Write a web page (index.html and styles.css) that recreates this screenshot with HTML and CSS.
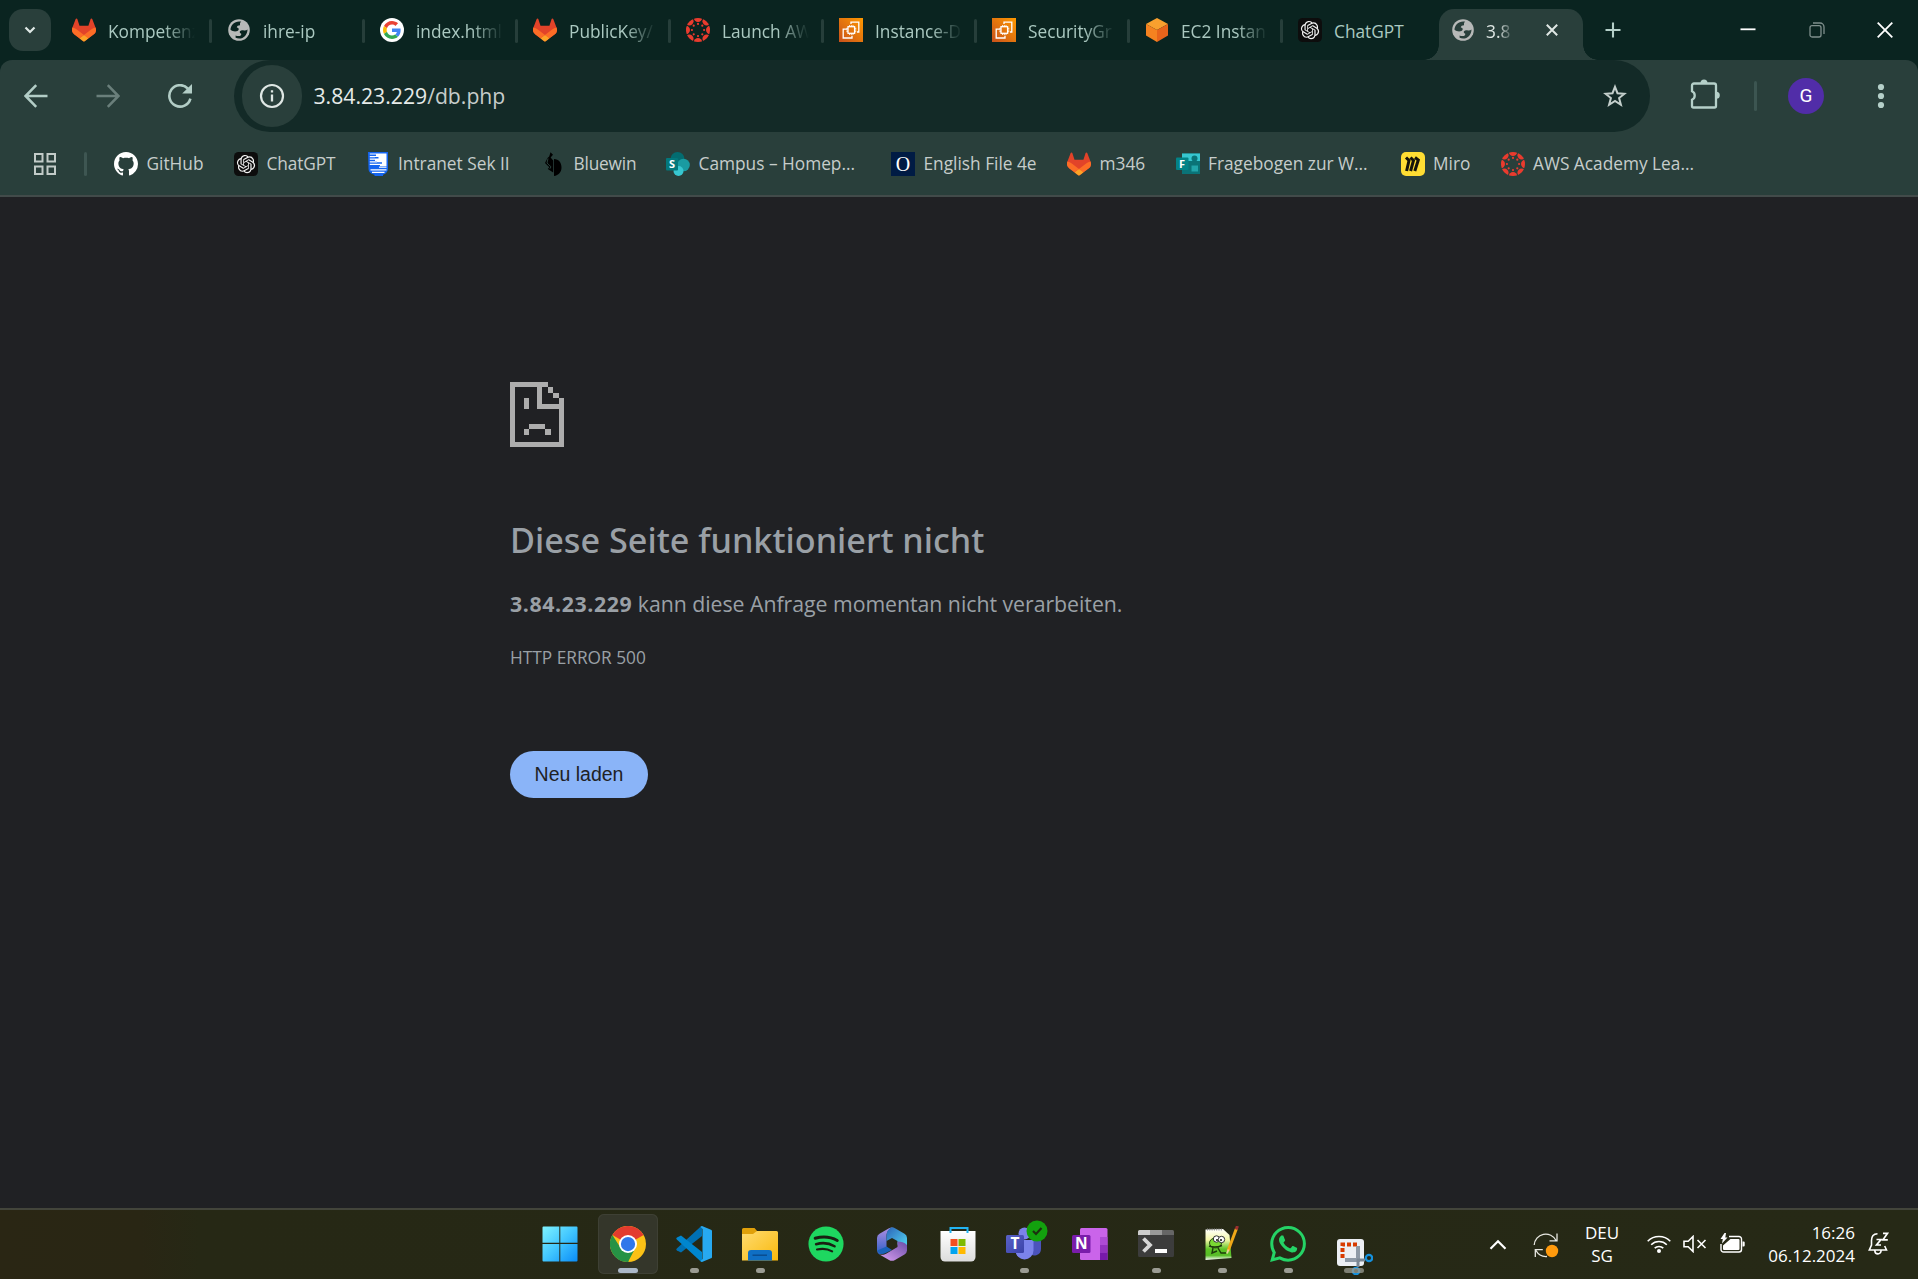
FILE: index.html
```html
<!DOCTYPE html>
<html lang="de">
<head>
<meta charset="utf-8">
<title>3.84.23.229</title>
<link rel="stylesheet" href="styles.css">
</head>
<body>
<svg class="defs" aria-hidden="true">
  <defs>
    <linearGradient id="g-ec2" x1="0" y1="1" x2="1" y2="0"><stop offset="0" stop-color="#c8511b"/><stop offset="1" stop-color="#ff9900"/></linearGradient>
    <linearGradient id="g-win" x1="0" y1="0" x2="1" y2="1"><stop offset="0" stop-color="#7ff3fe"/><stop offset=".5" stop-color="#41c6ff"/><stop offset="1" stop-color="#0a8cf7"/></linearGradient>
    <linearGradient id="g-folder" x1="0" y1="0" x2="1" y2="1"><stop offset="0" stop-color="#ffdb70"/><stop offset="1" stop-color="#f9b90c"/></linearGradient>
    <linearGradient id="g-m1" x1="0" y1="0" x2="0" y2="1"><stop offset="0" stop-color="#b08ee2"/><stop offset="1" stop-color="#2c5fc6"/></linearGradient>
    <linearGradient id="g-m2" x1="0" y1="0" x2="1" y2="1"><stop offset="0" stop-color="#2b63b8"/><stop offset="1" stop-color="#55dcf5"/></linearGradient>
    <linearGradient id="g-m3" x1="0" y1="1" x2="1" y2="0"><stop offset="0" stop-color="#dca2f3"/><stop offset="1" stop-color="#6a4da8"/></linearGradient>
    <linearGradient id="g-store" x1="0" y1="0" x2="0" y2="1"><stop offset="0" stop-color="#fff"/><stop offset="1" stop-color="#dcdcdc"/></linearGradient>
    <linearGradient id="g-note" x1="0" y1="0" x2="0" y2="1"><stop offset="0" stop-color="#fff"/><stop offset=".35" stop-color="#f4f7a8"/><stop offset=".65" stop-color="#5ec427"/><stop offset=".85" stop-color="#57bb26"/><stop offset="1" stop-color="#fff"/></linearGradient>
    <linearGradient id="g-teams" x1="0" y1="0" x2="1" y2="1"><stop offset="0" stop-color="#5a62c8"/><stop offset="1" stop-color="#3a41a8"/></linearGradient>
    <clipPath id="c-ring"><circle cx="12" cy="12" r="12"/></clipPath>

    <symbol id="i-gitlab" viewBox="0 0 25 24">
      <path fill="#e24329" d="m24.507 9.5-.034-.09L21.082.562a.896.896 0 0 0-1.694.091l-2.29 7.01H7.825L5.535.653a.898.898 0 0 0-1.694-.09L.451 9.411.416 9.5a6.297 6.297 0 0 0 2.09 7.278l.012.01.03.022 5.16 3.867 2.56 1.935 1.554 1.176a1.051 1.051 0 0 0 1.268 0l1.555-1.176 2.56-1.935 5.197-3.89.014-.01A6.297 6.297 0 0 0 24.507 9.5Z"/>
      <path fill="#fc6d26" d="m24.507 9.5-.034-.09a11.44 11.44 0 0 0-4.56 2.051l-7.447 5.632 4.742 3.584 5.197-3.89.014-.01A6.297 6.297 0 0 0 24.507 9.5Z"/>
      <path fill="#fca326" d="m7.707 20.677 2.56 1.935 1.555 1.176a1.051 1.051 0 0 0 1.268 0l1.555-1.176 2.56-1.935-4.743-3.584-4.755 3.584Z"/>
      <path fill="#fc6d26" d="M5.01 11.461a11.43 11.43 0 0 0-4.56-2.05L.416 9.5a6.297 6.297 0 0 0 2.09 7.278l.012.01.03.022 5.16 3.867 4.745-3.584-7.444-5.632Z"/>
    </symbol>
    <symbol id="i-globe" viewBox="0 0 24 24">
      <circle cx="12" cy="12" r="10.8" fill="#b7b9b8"/>
      <path fill="var(--hole)" d="M12.2 3.4c-5 0-8.700 4-8.700 8.400 1.600 1.300 3.800 1.800 6 1.500 1.300-.2 2.200-.9 2.200-2 0-1-.7-1.500-1.900-1.700.2-1.600 1.300-2.300 3.200-2.300V5.600c0-.9.4-1.500 1.200-1.900-.7-.2-1.300-.3-2-.3zM20.500 11.500c-1 .9-2.600 1.200-4.200.8-1.500-.3-2.500 0-3.300.9-.7.9-.1 2 1.100 2.200.6 1.500-.4 2.600-2.400 2.600-1.200 0-2.300 0-3.100-.5v2.300c1 .5 2.200.8 3.500.8 4.800 0 8.400-4 8.400-9.100z"/>
    </symbol>
    <symbol id="i-google" viewBox="0 0 24 24">
      <circle cx="12" cy="12" r="12" fill="#fff"/>
      <g transform="translate(3 3) scale(.375)">
        <path fill="#ea4335" d="M24 9.500c3.540 0 6.710 1.220 9.210 3.600l6.850-6.850C35.900 2.380 30.470 0 24 0 14.620 0 6.510 5.380 2.560 13.220l7.980 6.190C12.430 13.720 17.740 9.500 24 9.500z"/>
        <path fill="#4285f4" d="M46.980 24.550c0-1.570-.15-3.090-.38-4.550H24v9.020h12.940c-.58 2.960-2.260 5.480-4.780 7.180l7.730 6c4.510-4.180 7.090-10.360 7.090-17.650z"/>
        <path fill="#fbbc05" d="M10.530 28.590c-.48-1.450-.76-2.990-.76-4.590s.27-3.140.76-4.590l-7.980-6.190C.92 16.460 0 20.120 0 24c0 3.880.92 7.540 2.560 10.780l7.970-6.190z"/>
        <path fill="#34a853" d="M24 48c6.480 0 11.930-2.130 15.890-5.810l-7.730-6c-2.150 1.450-4.920 2.300-8.160 2.300-6.260 0-11.570-4.220-13.470-9.910l-7.980 6.190C6.510 42.620 14.620 48 24 48z"/>
      </g>
    </symbol>
    <symbol id="i-canvas" viewBox="0 0 24 24">
      <g fill="#ea3b2e" clip-path="url(#c-ring)">
        <circle cx="12" cy="-.2" r="4.200"/><circle cx="12" cy="24.200" r="4.200"/><circle cx="-.2" cy="12" r="4.200"/><circle cx="24.200" cy="12" r="4.200"/>
        <circle cx="3.370" cy="3.370" r="4.200"/><circle cx="20.630" cy="3.370" r="4.200"/><circle cx="3.370" cy="20.630" r="4.200"/><circle cx="20.630" cy="20.630" r="4.200"/>
        <circle cx="12" cy="5.900" r="1.100"/><circle cx="12" cy="18.100" r="1.100"/><circle cx="5.900" cy="12" r="1.100"/><circle cx="18.100" cy="12" r="1.100"/>
        <circle cx="7.700" cy="7.700" r="1.100"/><circle cx="16.300" cy="7.700" r="1.100"/><circle cx="7.700" cy="16.300" r="1.100"/><circle cx="16.300" cy="16.300" r="1.100"/>
      </g>
    </symbol>
    <symbol id="i-ec2" viewBox="0 0 24 24">
      <path fill="url(#g-ec2)" d="M0 0h24v24H0z"/>
      <g fill="none" stroke="#fff" stroke-width="1.300">
        <path d="M12 6V4.200h7.800V14H18M8 11.200H4.200V20H13v-2.200"/>
        <rect x="9" y="8.700" width="6.600" height="6.600"/>
        <path stroke-width=".9" d="M10.600 7v1.700M12.300 7v1.700M14 7v1.700M10.600 15.300V17M12.300 15.300V17M14 15.300V17M7.300 10.300H9M7.300 12H9M7.300 13.700H9M15.600 10.300h1.700M15.600 12h1.700M15.600 13.700h1.700"/>
      </g>
    </symbol>
    <symbol id="i-cube" viewBox="0 0 24 24">
      <path fill="#f9a02e" d="M12 0 23 6 12 12 1 6z"/><path fill="#f58220" d="M1 6l11 6v12L1 17.500z"/><path fill="#e8641b" d="M23 6l-11 6v12l11-6.500z"/>
    </symbol>
    <symbol id="i-gpt" viewBox="0 0 24 24">
      <rect width="24" height="24" rx="4.500" fill="#0d0d0d"/>
      <path transform="translate(2.900 2.900) scale(.76)" fill="#f2f2f2" d="M22.2819 9.8211a5.9847 5.9847 0 0 0-.5157-4.9108 6.0462 6.0462 0 0 0-6.5098-2.9A6.0651 6.0651 0 0 0 4.9807 4.1818a5.9847 5.9847 0 0 0-3.9977 2.9 6.0462 6.0462 0 0 0 .7427 7.0966 5.98 5.98 0 0 0 .511 4.9107 6.051 6.051 0 0 0 6.5146 2.9001A5.9847 5.9847 0 0 0 13.2599 24a6.0557 6.0557 0 0 0 5.7718-4.2058 5.9894 5.9894 0 0 0 3.9977-2.9001 6.0557 6.0557 0 0 0-.7475-7.0729zm-9.022 12.6081a4.4755 4.4755 0 0 1-2.8764-1.0408l.1419-.0804 4.7783-2.7582a.7948.7948 0 0 0 .3927-.6813v-6.7369l2.02 1.1686a.071.071 0 0 1 .038.052v5.5826a4.504 4.504 0 0 1-4.4945 4.4944zm-9.6607-4.1254a4.4708 4.4708 0 0 1-.5346-3.0137l.142.0852 4.783 2.7582a.7712.7712 0 0 0 .7806 0l5.8428-3.3685v2.3324a.0804.0804 0 0 1-.0332.0615L9.74 19.9502a4.4992 4.4992 0 0 1-6.1408-1.6464zM2.3408 7.8956a4.485 4.485 0 0 1 2.3655-1.9728V11.6a.7664.7664 0 0 0 .3879.6765l5.8144 3.3543-2.0201 1.1685a.0757.0757 0 0 1-.071 0l-4.8303-2.7865A4.504 4.504 0 0 1 2.3408 7.872zm16.5963 3.8558L13.1038 8.364 15.1192 7.2a.0757.0757 0 0 1 .071 0l4.8303 2.7913a4.4944 4.4944 0 0 1-.6765 8.1042v-5.6772a.79.79 0 0 0-.407-.667zm2.0107-3.0231l-.142-.0852-4.7735-2.7818a.7759.7759 0 0 0-.7854 0L9.409 9.2297V6.8974a.0662.0662 0 0 1 .0284-.0615l4.8303-2.7866a4.4992 4.4992 0 0 1 6.6802 4.66zM8.3065 12.863l-2.02-1.1638a.0804.0804 0 0 1-.038-.0567V6.0742a4.4992 4.4992 0 0 1 7.3757-3.4537l-.142.0805L8.704 5.459a.7948.7948 0 0 0-.3927.6813zm1.0976-2.3654l2.602-1.4998 2.6069 1.4998v2.9994l-2.5974 1.4997-2.6067-1.4997Z"/>
    </symbol>
  </defs>
</svg>

<header class="tabstrip">
  <button class="tab-search"><svg width="18" height="18" viewBox="0 0 18 18"><path d="M4.500 6.500 9 11l4.500-4.500" fill="none" stroke="#dfe9e6" stroke-width="2.200"/></svg></button>
  <div class="tab first"><svg class="fav"><use href="#i-gitlab"/></svg><span class="title">Kompetenz</span></div>
  <div class="tab"><svg class="fav"><use href="#i-globe"/></svg><span class="title">ihre-ip</span></div>
  <div class="tab"><svg class="fav"><use href="#i-google"/></svg><span class="title">index.html</span></div>
  <div class="tab"><svg class="fav"><use href="#i-gitlab"/></svg><span class="title">PublicKey/</span></div>
  <div class="tab"><svg class="fav"><use href="#i-canvas"/></svg><span class="title">Launch AW</span></div>
  <div class="tab"><svg class="fav"><use href="#i-ec2"/></svg><span class="title">Instance-D</span></div>
  <div class="tab"><svg class="fav"><use href="#i-ec2"/></svg><span class="title">SecurityGr</span></div>
  <div class="tab"><svg class="fav"><use href="#i-cube"/></svg><span class="title">EC2 Instan</span></div>
  <div class="tab last"><svg class="fav"><use href="#i-gpt"/></svg><span class="title">ChatGPT</span></div>
  <div class="tab active"><svg class="fav"><use href="#i-globe"/></svg><span class="title">3.8</span><svg class="close" width="12" height="12" viewBox="0 0 12 12"><path d="M.8.8l10.400 10.400M11.200.8.8 11.200" stroke="#dfe7e4" stroke-width="2"/></svg></div>
  <button class="newtab"><svg width="16" height="16" viewBox="0 0 16 16"><path d="M8 .5v15M.5 8h15" stroke="#b5d0c9" stroke-width="2.100"/></svg></button>
  <div class="window-controls">
    <svg width="16" height="16" viewBox="0 0 16 16"><path d="M.5 7.300h15" stroke="#fff" stroke-width="1.800"/></svg>
    <svg width="16" height="16" viewBox="0 0 16 16"><g fill="none" stroke="#7f8f8c" stroke-width="1.300"><rect x="1" y="3.700" width="11" height="11.300" rx="2"/><path d="M4 1h7a4 4 0 0 1 4 4v7"/></g></svg>
    <svg width="16" height="16" viewBox="0 0 16 16"><path d="M.7.7l14.600 14.600M15.300.7.7 15.300" stroke="#fff" stroke-width="1.800"/></svg>
  </div>
</header>

<div class="toolbar-wrap">
<nav class="toolbar">
  <svg class="nav-ico" viewBox="0 0 24 24"><path d="M23.500 12H2M12.200 1.200 1.600 12l10.600 10.800" fill="none" stroke="#b2cdc6" stroke-width="2.500"/></svg>
  <svg class="nav-ico" viewBox="0 0 24 24"><path d="M.5 12H22M11.800 1.200 22.400 12 11.800 22.800" fill="none" stroke="#6a7f7b" stroke-width="2.500"/></svg>
  <svg class="nav-ico" viewBox="0 0 24 24"><path d="M22.400 14.600A10.700 10.700 0 1 1 19.900 4.600" fill="none" stroke="#b2cdc6" stroke-width="2.600"/><path d="M24 0v9.500h-9.800z" fill="#b2cdc6"/></svg>
  <div class="omnibox">
    <span class="site-info"><svg width="26" height="26" viewBox="0 0 26 26"><circle cx="13" cy="13" r="11" fill="none" stroke="#dfe7e4" stroke-width="2.200"/><path d="M13 11.500v7M13 7.200v2.400" stroke="#dfe7e4" stroke-width="2.300"/></svg></span>
    <span class="url"><b>3.84.23.229</b>/db.php</span>
    <svg class="star" width="24" height="24" viewBox="0 0 24 24"><path d="M12 2.800l2.500 6.400 6.900.5-5.300 4.400 1.800 6.700-5.900-3.800-5.900 3.800 1.800-6.700L2.600 9.700l6.900-.5z" fill="none" stroke="#c4cfcc" stroke-width="2"/></svg>
  </div>
  <svg class="puzzle" width="30" height="30" viewBox="0 0 30 30"><path d="M2 6.500a2 2 0 0 1 2-2h20a2 2 0 0 1 2 2v20.500a1.500 1.500 0 0 1-1.500 1.500h-21A1.500 1.500 0 0 1 2 27v-6.300a4.600 4.600 0 0 0 0-8.400z" fill="none" stroke="#b5d0c9" stroke-width="2.300"/><path d="M10.500 4a3.500 3.500 0 0 1 7 0zM26.300 12.800a3.500 3.500 0 0 1 0 7z" fill="#b5d0c9"/></svg>
  <i class="bar-divider"></i>
  <span class="avatar">G</span>
  <svg class="menu" width="8" height="26" viewBox="0 0 8 26"><g fill="#b5d0c9"><circle cx="4" cy="4" r="3.100"/><circle cx="4" cy="13" r="3.100"/><circle cx="4" cy="22" r="3.100"/></g></svg>
</nav>
</div>

<nav class="bookmarks">
  <svg class="apps" width="22" height="22" viewBox="0 0 22 22"><g fill="none" stroke="#c2cbc8" stroke-width="2"><rect x="1" y="1" width="7.500" height="7.500"/><rect x="13.500" y="1" width="7.500" height="7.500"/><rect x="1" y="13.500" width="7.500" height="7.500"/><rect x="13.500" y="13.500" width="7.500" height="7.500"/></g></svg>
  <i class="bm-divider"></i>
  <a><svg class="fav" viewBox="0 0 16 16"><path fill="#fff" d="M8 0C3.580 0 0 3.580 0 8c0 3.540 2.290 6.530 5.470 7.590.4.070.55-.17.55-.38 0-.19-.01-.82-.01-1.490-2.010.37-2.530-.49-2.690-.94-.09-.23-.48-.94-.82-1.130-.28-.15-.68-.52-.01-.53.63-.01 1.080.58 1.230.82.72 1.210 1.870.87 2.330.66.070-.52.28-.87.51-1.070-1.780-.2-3.640-.89-3.640-3.950 0-.87.31-1.590.82-2.150-.08-.2-.36-1.020.08-2.120 0 0 .67-.21 2.200.82.64-.18 1.320-.27 2-.27s1.360.09 2 .27c1.530-1.040 2.200-.82 2.200-.82.44 1.100.16 1.920.08 2.120.51.56.82 1.270.82 2.150 0 3.070-1.870 3.750-3.650 3.950.29.25.54.73.54 1.480 0 1.070-.01 1.930-.01 2.200 0 .21.15.46.55.38A8.010 8.010 0 0 0 16 8c0-4.420-3.580-8-8-8z"/></svg><span class="b-git">GitHub</span></a>
  <a><svg class="fav"><use href="#i-gpt"/></svg><span class="b-gpt">ChatGPT</span></a>
  <a><svg class="fav" viewBox="0 0 24 24"><path fill="#1565f0" d="M2 0h20v16.500c0 3-1.500 5-5 6.200V24H8.500v-1.200C4 21.700 2.500 19.500 2.500 16.500z"/><path fill="#fff" d="M9 1.500h11.500V9H9zM11 9h9.500v5h-9.500z"/><g stroke="#fff" stroke-width="1.300"><path d="M13 15.200h7.500M4.500 17.800h16M6 20.400h12.500"/></g><g stroke="#1565f0" stroke-width="1.400"><path d="M3 3.200h7M3 5.800h9.500M3 8.400h5M3 11h13M3 13.600h11"/></g><path stroke="#fff" stroke-width="1.200" d="M3.800 2H9M3.800 4.600H9M3.800 7.200H9M3.800 9.800H11M3.800 12.300H11"/></svg><span class="b-intra">Intranet Sek II</span></a>
  <a><svg class="fav" viewBox="0 0 24 24"><path fill="#000" d="M9.500.3 12 2.800 9.600 5.500 12.200 8.500v12L6.800 17l1.500-1.800L4 11l2.500-5 1.700-1.500zM13 7c5 .3 7.500 3.800 7.500 8.500 0 4.500-3 8-7.500 8.500z"/><path d="M7 6.500 6 11l4 3.800-1.200 2" fill="none" stroke="#293f3b" stroke-width="1"/></svg><span class="b-blue">Bluewin</span></a>
  <a><svg class="fav" viewBox="0 0 24 24"><circle cx="11.500" cy="7" r="7" fill="#036c70"/><circle cx="17.500" cy="13" r="6.300" fill="#1a9ba1"/><circle cx="12.500" cy="19" r="5" fill="#37c6d0"/><rect y="6" width="12" height="12.500" rx="1" fill="#03787c"/><text x="6" y="16" text-anchor="middle" class="glyph">S</text></svg><span class="long">Campus – Homep...</span></a>
  <a><svg class="fav" viewBox="0 0 24 24"><path fill="#001b44" d="M0 0h24v24H0z"/><text x="12" y="19" text-anchor="middle" class="glyph-o">O</text></svg><span class="b-eng">English File 4e</span></a>
  <a><svg class="fav"><use href="#i-gitlab"/></svg><span class="b-m">m346</span></a>
  <a><svg class="fav" viewBox="0 0 24 24"><path fill="#0a7377" d="M6 1.500h18v20.500H6z"/><path fill="#37c6d0" d="M6 1.500h18V9H6z"/><circle cx="18.500" cy="6.500" r="3" fill="#0a7377"/><path fill="#21a5aa" d="M15.500 13.500H22v6h-6.500z"/><rect y="5.500" width="12.500" height="12.500" rx="1" fill="#038387"/><text x="6" y="15.700" text-anchor="middle" class="glyph">F</text></svg><span class="long">Fragebogen zur W...</span></a>
  <a><svg class="fav" viewBox="0 0 24 24"><rect width="24" height="24" rx="5" fill="#ffdd33"/><path d="M5 5.500 8 8.500 5.600 19M9.500 5.500l3 3L9.600 19M14 5.500l3.300 2.500L13.800 19" fill="none" stroke="#15130a" stroke-width="3"/></svg><span class="b-miro">Miro</span></a>
  <a><svg class="fav"><use href="#i-canvas"/></svg><span>AWS Academy Lea...</span></a>
</nav>

<main class="page">
  <svg class="sad" width="54" height="65" viewBox="0 0 20 24" preserveAspectRatio="none" shape-rendering="crispEdges"><path fill="#adadad" d="M0 0h14v2h2v2h2v2h2v18H0zM2 2v20h16V10h-8V2zM12 2v6h6V6h-2V4h-2V2zM5 6h2v4H5zM7 15.500h6v2H7zM5 17.500h2v2H5zM13 17.500h2v2h-2z" fill-rule="evenodd"/></svg>
  <h1>Diese Seite funktioniert nicht</h1>
  <p class="summary"><strong>3.84.23.229</strong> kann diese Anfrage momentan nicht verarbeiten.</p>
  <p class="code">HTTP ERROR 500</p>
  <button class="reload">Neu laden</button>
</main>

<footer class="taskbar">
  <div class="apps-row">
    <div class="app start"><svg viewBox="0 0 36 36"><path fill="url(#g-win)" d="M1.500.5h15.800v16.300H.5V1.500a1 1 0 0 1 1-1zM18.300.5h16.200a1 1 0 0 1 1 1v15.300H18.300zM.5 18h16.800v17.500H1.500a1 1 0 0 1-1-1zM18.300 18h17.200v16.500a1 1 0 0 1-1 1H18.300z"/></svg></div>
    <div class="app focused"><svg viewBox="0 0 48 48"><circle cx="24" cy="24" r="24" fill="#fbc116"/><path fill="#e33b2e" d="M24 24 3.200 12A24 24 0 0 1 44.800 12z"/><path fill="#269245" d="M3.200 12 14.400 29.500 24 34l.5 14A24 24 0 0 1 3.200 12z"/><path fill="#269245" d="M14.400 29.500 24 35l9.600-5.500L24 48z"/><circle cx="24" cy="24" r="12" fill="#fff"/><circle cx="24" cy="24" r="9.500" fill="#2f77ea"/></svg><i class="run long-run"></i></div>
    <div class="app"><svg viewBox="0 0 36 36"><path fill="#0070b3" d="M26 0v10L5 26.500 1 24.500a1.300 1.300 0 0 1-.2-2L24.500.8z"/><path fill="#0086cf" d="M26 36V26L5 9.500 1 11.500a1.300 1.300 0 0 0-.2 2L24.500 35.200z"/><path fill="#27a9f1" d="M26 0l9 3.700a1.500 1.500 0 0 1 1 1.400v25.800a1.500 1.500 0 0 1-1 1.400L26 36l-1.500-.8L26.500 33V3L24.500.8z"/></svg><i class="run"></i></div>
    <div class="app"><svg viewBox="0 0 36 36"><path fill="#e0a00a" d="M0 3.500A1.500 1.500 0 0 1 1.500 2h11l3 3.500L12 9H0z"/><path fill="url(#g-folder)" d="M0 8h11l4-3h19.500A1.500 1.500 0 0 1 36 6.500V34.500H0z"/><path fill="#0f6fc4" d="M6 34.500V27a3 3 0 0 1 3-3h18a3 3 0 0 1 3 3v7.500z"/><path d="M10.500 29.200h14.500" stroke="#0a4a8c" stroke-width="1.400"/></svg><i class="run"></i></div>
    <div class="app"><svg viewBox="0 0 24 24"><circle cx="12" cy="12" r="11.700" fill="#1ed760"/><path fill="none" stroke="#1a1f12" stroke-linecap="round" stroke-width="2" d="M4.800 8.200c5-1.400 10.500-.9 14.700 1.500"/><path fill="none" stroke="#1a1f12" stroke-linecap="round" stroke-width="1.700" d="M5.400 12.100c4.300-1.200 8.700-.7 12.300 1.400"/><path fill="none" stroke="#1a1f12" stroke-linecap="round" stroke-width="1.400" d="M6 15.700c3.600-.9 7.100-.5 10.100 1.200"/></svg></div>
    <div class="app"><svg viewBox="0 0 36 36"><path fill="url(#g-m1)" d="M19 1.500c-4 1.500-6.500 4-6.500 9V25L5.500 28.500A5 5 0 0 1 3 24.500V12a5 5 0 0 1 2.500-4.300l9.500-5.500A7 7 0 0 1 19 1.500z"/><path fill="url(#g-m2)" d="M12.500 15v-4.500c0-5 2-7.700 5.500-9.200a6 6 0 0 1 3 .9l9.500 5.500A5 5 0 0 1 33 12v11l-9.500-4.500V15L18 12z"/><path fill="#1b62b8" d="M3.200 24.500c1.500 3.500 5 4.300 8.500 2.500L18 24l-5.500-3.500z"/><path fill="url(#g-m3)" d="M33 19v5.500a5 5 0 0 1-2.500 4L21 34a6 6 0 0 1-6 0l-9.500-5.500c3 .8 5 .1 7-1L23.500 21v-5.500c3.500 0 7 .5 9.500 3.500z"/></svg></div>
    <div class="app"><svg viewBox="0 0 36 36"><path d="M10.500 7V2h17v5" fill="none" stroke="#22b4f2" stroke-width="2"/><path fill="url(#g-store)" d="M.5 5h35v26a4.500 4.500 0 0 1-4.500 4.500H5A4.500 4.500 0 0 1 .5 31z"/><path d="M10.500 5v2M27.500 5v2" stroke="#22b4f2" stroke-width="2"/><path fill="#f25022" d="M10.500 13h7v7h-7z"/><path fill="#7fba00" d="M18.500 13h7v7h-7z"/><path fill="#00a4ef" d="M10.500 21h7v7h-7z"/><path fill="#ffb900" d="M18.500 21h7v7h-7z"/></svg></div>
    <div class="app teams"><svg viewBox="0 0 36 36"><path fill="#4b53bc" d="M23 14h12v9a6.500 6.500 0 0 1-12 3.500z"/><circle cx="18.500" cy="7.500" r="6" fill="#7b83eb"/><path fill="#7b83eb" d="M10 14h17.500v10.500a9 9 0 0 1-18 0z"/><rect y="9" width="18" height="18" rx="1.500" fill="url(#g-teams)"/><text x="9" y="22.800" text-anchor="middle" class="glyph-l">T</text></svg><svg class="status" viewBox="0 0 22 22"><circle cx="11" cy="11" r="10.500" fill="#13a10e"/><path d="M7 11l3 3 5.500-6" fill="none" stroke="#1c3010" stroke-width="2.200"/></svg><i class="run"></i></div>
    <div class="app"><svg viewBox="0 0 36 36"><path fill="#ca64ea" d="M9.500 2H34a1.500 1.500 0 0 1 1.500 1.500V34h-26A1.500 1.500 0 0 1 8 32.500v-29A1.500 1.500 0 0 1 9.500 2z"/><path fill="#ae4bd5" d="M28 11h7.500v8H28z"/><path fill="#9332bf" d="M28 19h7.500v7.500H28z"/><path fill="#7719aa" d="M28 26.500h7.500V34H28z"/><rect y="9" width="18.500" height="18" rx="1.500" fill="#7a1cab"/><text x="9.200" y="22.800" text-anchor="middle" class="glyph-l">N</text></svg></div>
    <div class="app"><svg viewBox="0 0 36 36"><path fill="#3c3c3c" d="M0 9h36v20.500a1.500 1.500 0 0 1-1.500 1.500h-33A1.500 1.500 0 0 1 0 29.500z"/><path fill="#ccc" d="M1.500 4H12v5H0V5.500A1.500 1.500 0 0 1 1.500 4z"/><path fill="#999" d="M12 4h12v5H12z"/><path fill="#666" d="M24 4h10.500A1.500 1.500 0 0 1 36 5.500V9H24z"/><path d="M5.500 12.500 12 19l-6.500 6.500" fill="none" stroke="#d6d6d6" stroke-width="3.800"/><path d="M17 25h12" stroke="#fff" stroke-width="4"/></svg><i class="run"></i></div>
    <div class="app"><svg viewBox="0 0 36 36"><path fill="url(#g-note)" d="M1.500 3.500 19 3l6.500 6 2 23-26 2z"/><path d="M3 3.500h15" stroke="#8a8a8a" stroke-width="2" stroke-dasharray="1 1.300"/><ellipse cx="11.500" cy="17" rx="6" ry="5" fill="#7ad832" stroke="#2a4a12"/><circle cx="12.500" cy="13" r="3.200" fill="#fff" stroke="#333"/><circle cx="17.500" cy="13.500" r="3.200" fill="#fff" stroke="#333"/><circle cx="13" cy="14" r="1" fill="#111"/><circle cx="17" cy="14" r="1" fill="#111"/><path d="M5 20c5 2 8 1.500 13-.5M9 22l-1 5 5-2M14 22l3 5h5" fill="none" stroke="#1d3b0b" stroke-width="1.400"/><path d="M32.500 2.500 24 25" stroke="#f0a818" stroke-width="3"/><path d="M33.500 0l-1.300 3.500" stroke="#9c3030" stroke-width="3"/><path d="M24.500 23.500 23 27.500" stroke="#e8d0a0" stroke-width="1.800"/></svg><i class="run"></i></div>
    <div class="app"><svg viewBox="0 0 24 24"><path fill="#25d366" d="M17.472 14.382c-.297-.149-1.758-.867-2.030-.967-.273-.099-.471-.148-.67.150-.197.297-.767.966-.940 1.164-.173.199-.347.223-.644.075-.297-.150-1.255-.463-2.390-1.475-.883-.788-1.480-1.761-1.653-2.059-.173-.297-.018-.458.130-.606.134-.133.298-.347.446-.520.149-.174.198-.298.298-.497.099-.198.050-.371-.025-.520-.075-.149-.669-1.612-.916-2.207-.242-.579-.487-.500-.669-.510-.173-.008-.371-.010-.570-.010-.198 0-.520.074-.792.372-.272.297-1.040 1.016-1.040 2.479 0 1.462 1.065 2.875 1.213 3.074.149.198 2.096 3.200 5.077 4.487.709.306 1.262.489 1.694.625.712.227 1.360.195 1.871.118.571-.085 1.758-.719 2.006-1.413.248-.694.248-1.289.173-1.413-.074-.124-.272-.198-.570-.347m-5.421 7.403h-.004a9.870 9.870 0 0 1-5.031-1.378l-.361-.214-3.741.982.998-3.648-.235-.374a9.860 9.860 0 0 1-1.510-5.260c.001-5.450 4.436-9.884 9.888-9.884 2.640 0 5.122 1.030 6.988 2.898a9.825 9.825 0 0 1 2.893 6.994c-.003 5.450-4.437 9.884-9.885 9.884m8.413-18.297A11.815 11.815 0 0 0 12.050 0C5.495 0 .160 5.335.157 11.892c0 2.096.547 4.142 1.588 5.945L.057 24l6.305-1.654a11.882 11.882 0 0 0 5.683 1.448h.005c6.554 0 11.890-5.335 11.893-11.893a11.821 11.821 0 0 0-3.480-8.413Z"/></svg><i class="run"></i></div>
    <div class="app snip"><svg viewBox="0 0 36 36"><rect width="27" height="27" rx="3" fill="#eceff4"/><path d="M5.500 19V5.500H20" fill="none" stroke="#d83b01" stroke-width="4" stroke-dasharray="4 2"/><path d="M21 7v15M8 21h15" stroke="#8e99a6" stroke-width="4"/><path d="M21 20v8M20 21h8" stroke="#7b8794" stroke-width="3"/><circle cx="32" cy="19" r="3.200" fill="none" stroke="#1591dd" stroke-width="2.300"/><circle cx="19" cy="32" r="3.200" fill="none" stroke="#1591dd" stroke-width="2.300"/></svg><i class="run snip-run"></i></div>
  </div>
  <div class="tray">
    <svg class="t-chev" width="18" height="12" viewBox="0 0 18 12"><path d="M1.500 9.800 9 2.300l7.500 7.500" fill="none" stroke="#fff" stroke-width="2.200"/></svg>
    <svg class="t-sync" width="26" height="26" viewBox="0 0 26 26"><g fill="none" stroke="#e8e8e2" stroke-width="1.300"><path d="M1.200 13A11.500 11.500 0 0 1 23 8.500M24 1.500v7.300h-7.500M2.300 25v-7.300h7.500M3 18.500a11.500 11.500 0 0 0 11 6"/></g><circle cx="19" cy="19" r="6.200" fill="#ff9a0d"/></svg>
    <div class="lang"><span>DEU</span><span>SG</span></div>
    <svg class="t-wifi" width="24" height="18" viewBox="0 0 24 18"><g fill="none" stroke="#fff" stroke-width="1.600"><path d="M.7 6.200a16 16 0 0 1 22.600 0M4.200 9.800a11 11 0 0 1 15.600 0M7.700 13.200a6.200 6.200 0 0 1 8.600 0"/></g><circle cx="12" cy="16" r="2" fill="#fff"/></svg>
    <svg class="t-vol" width="24" height="18" viewBox="0 0 24 18"><path d="M1 6.200h4.200L10 1.500v15l-4.800-4.700H1zM14.500 5l8 8M22.500 5l-8 8" fill="none" stroke="#fff" stroke-width="1.600"/></svg>
    <svg class="t-bat" width="25" height="20" viewBox="0 0 25 20"><path d="M9 3.500h10A2.500 2.500 0 0 1 21.500 6v10.500A2.500 2.500 0 0 1 19 19H3.500A2.500 2.500 0 0 1 1 16.500V11" fill="none" stroke="#fff" stroke-width="1.400"/><path fill="#fff" d="M10.500 6h8a1 1 0 0 1 1 1v9a1 1 0 0 1-1 1H4a1 1 0 0 1-1-1v-3.500zM22.500 8.500h1.200a1 1 0 0 1 1 1v3a1 1 0 0 1-1 1h-1.200zM4.500 0 .5 6h2.300L2 10.500 7.500 4.500H5.300L6 0z"/></svg>
    <div class="clock"><span>16:26</span><span>06.12.2024</span></div>
    <svg class="t-bell" width="22" height="23" viewBox="0 0 22 23"><path d="M9.500 1.800C5.500 2 3.500 5 3.500 8.500v4.500L1.300 18h17.200l-1.800-4M6.800 18.500c0 4.500 6.300 4.500 6.300 0" fill="none" stroke="#fff" stroke-width="1.600"/><path d="M8.500 7.500h4.500L8.500 13H13M15 1.300h4.500L15 7.800h4.800" fill="none" stroke="#fff" stroke-width="1.700"/></svg>
  </div>
</footer>
</body>
</html>
```
FILE: styles.css
```css
* { box-sizing: border-box; }

body {
  margin: 0;
  width: 1918px;
  height: 1279px;
  display: flex;
  flex-direction: column;
  overflow: hidden;
  background: #202124;
  font-family: "Open Sans", "Noto Sans", sans-serif;
}

button { border: 0; padding: 0; font: inherit; }
svg { display: block; flex: none; }
.defs { position: absolute; width: 0; height: 0; }
.fav { width: 24px; height: 24px; }

/* Tab strip */
.tabstrip {
  --hole: #0a2420;
  display: flex;
  flex: none;
  height: 60px;
  padding-left: 9px;
  background: #0a2420;
}
.tab-search {
  width: 42px;
  height: 42px;
  margin: 9px 6px 0 0;
  display: grid;
  place-items: center;
  border-radius: 14px;
  background: #293f3b;
}
.tab {
  position: relative;
  display: flex;
  align-items: center;
  width: 153px;
  height: 60px;
  padding: 0 0 0 15px;
  color: #abc9c1;
  font-size: 17.3px;
}
.tab.first { width: 155px; }
.tab::after {
  content: "";
  position: absolute;
  right: 0;
  top: 19px;
  width: 3px;
  height: 24px;
  border-radius: 2px;
  background: #263e3a;
}
.tab.last { width: 156px; }
.tab.last::after { display: none; }
.title {
  margin-left: 12px;
  padding-top: 3px;
  width: 93px;
  line-height: 24px;
  white-space: nowrap;
  -webkit-mask-image: linear-gradient(90deg, #000 56px, transparent 87px);
  mask-image: linear-gradient(90deg, #000 56px, transparent 87px);
}
.tab.last .title { -webkit-mask-image: none; mask-image: none; }
.tab.active {
  --hole: #293f3b;
  width: 144px;
  height: 51px;
  margin-top: 9px;
  padding: 0 0 9px 12px;
  border-radius: 15px 15px 0 0;
  background: #293f3b;
  color: #dfe7e4;
}
.tab.active .title {
  margin-left: 11px;
  width: 28px;
  -webkit-mask-image: linear-gradient(90deg, #000 12px, transparent 28px);
  mask-image: linear-gradient(90deg, #000 12px, transparent 28px);
}
.tab.active::before,
.tab.active::after {
  content: "";
  position: absolute;
  top: auto;
  bottom: 0;
  width: 15px;
  height: 15px;
  border-radius: 0;
}
.tab.active::before { left: -15px; background: radial-gradient(circle at 0 0, transparent 14.5px, #293f3b 15px); }
.tab.active::after { right: -15px; background: radial-gradient(circle at 100% 0, transparent 14.5px, #293f3b 15px); }
.close { margin-left: 32px; }
.newtab { width: 60px; display: grid; place-items: center; background: none; }
.window-controls {
  display: flex;
  gap: 52.5px;
  margin-left: auto;
  padding: 22px 25px 0 0;
}

/* Toolbar */
.toolbar-wrap { flex: none; background: #0a2420; }
.toolbar {
  display: flex;
  align-items: center;
  height: 72px;
  padding-left: 24px;
  background: #293f3b;
  border-radius: 12px 12px 0 0;
}
.nav-ico { width: 24px; height: 24px; margin-right: 48px; }
.omnibox {
  display: flex;
  align-items: center;
  width: 1416px;
  height: 72px;
  margin-left: -6px;
  padding-left: 8px;
  border-radius: 36px;
  background: #132a27;
}
.site-info {
  display: grid;
  place-items: center;
  width: 60px;
  height: 62px;
  border-radius: 31px;
  background: #293f3b;
}
.url { margin-left: 11.5px; font-size: 21.2px; line-height: 30px; color: #c6cdcb; }
.url b { font-weight: 400; color: #e6ebe9; }
.star { margin: 0 23px 0 auto; }
.puzzle { margin-left: 40px; margin-top: -4px; }
.bar-divider { width: 3px; height: 30px; margin-left: 34px; border-radius: 2px; background: #3c5551; }
.avatar {
  width: 36px;
  height: 36px;
  margin-left: 31px;
  border-radius: 50%;
  background: #512da8;
  color: #fff;
  font: 400 19px/36px Roboto, sans-serif;
  text-align: center;
}
.menu { margin-left: 53px; }

/* Bookmarks bar */
.bookmarks {
  display: flex;
  flex: none;
  align-items: center;
  height: 65px;
  padding-left: 34px;
  background: #293f3b;
  border-bottom: 2px solid #424b4a;
  color: #c6cdcb;
  font-size: 17.3px;
}
.bm-divider { width: 3px; height: 24px; margin: 0 27px 0 28px; border-radius: 2px; background: #3e5652; }
.bookmarks a { display: flex; align-items: center; gap: 8.5px; margin-right: 30px; white-space: nowrap; line-height: 24px; }
.b-git { width: 57.5px; }
.b-gpt { width: 69px; letter-spacing: -.1px; }
.b-intra { width: 113px; }
.b-blue { width: 62.5px; letter-spacing: -.2px; }
.b-eng { width: 113.5px; }
.b-m { width: 46px; }
.b-miro { width: 37.5px; }
.bookmarks .long { width: 162.5px; }
.glyph { font: 700 11px "Open Sans", sans-serif; fill: #fff; }
.glyph-o { font: 400 20px "Liberation Serif", serif; fill: #fff; }
.glyph-l { font: 700 15.5px "Open Sans", sans-serif; fill: #fff; }

/* Error page */
.page {
  flex: 1;
  padding: 185px 0 0 510px;
  color: #9aa0a6;
}
.sad { margin-bottom: 71px; }
h1 { margin: 0; font: 500 34.2px/44px "Noto Sans", sans-serif; }
.summary { margin: 26px 0 0; font-size: 21.3px; line-height: 32px; letter-spacing: -.04px; }
.summary strong { letter-spacing: .6px; }
.code { margin: 25px 0 0; font-size: 17.3px; line-height: 26px; }
.reload {
  display: block;
  width: 138px;
  height: 47px;
  margin-top: 80px;
  border-radius: 24px;
  background: #8ab4f8;
  color: #202124;
  font: 19.5px "Liberation Sans", sans-serif;
}

/* Taskbar */
.taskbar {
  position: relative;
  display: flex;
  flex: none;
  height: 71px;
  border-top: 2px solid #43453b;
  background: linear-gradient(90deg, #2a2614 0, #292614 140px, #262815 200px, #262916 100%);
}
.apps-row { display: flex; gap: 6px; padding: 4px 0 0 530px; }
.app { position: relative; display: flex; flex-direction: column; align-items: center; width: 60px; height: 60px; padding-top: 12px; }
.app.start { margin-right: 2px; }
.app > svg:first-child { width: 36px; height: 36px; }
.app.focused { border-radius: 6px; background: #34362a; box-shadow: inset 0 0 0 1px #3e4034; }
.run { width: 9px; height: 5px; margin-top: 6px; border-radius: 3px; background: #9b9c93; }
.long-run { width: 20px; background: #abb8c8; }
.status { position: absolute; left: 32px; top: 6px; width: 22px; height: 22px; }
.snip > svg:first-child { margin-right: -1px; }
.snip { padding-top: 25px; }
.snip-run { width: 20px; margin-top: -7px; opacity: .75; }
.tray { display: flex; align-items: center; height: 69px; margin-left: auto; padding-right: 28px; color: #fff; font-size: 17px; line-height: 23px; }
.t-sync { margin: 0 0 0 26px; }
.lang, .clock { display: flex; flex-direction: column; margin-top: -2px; }
.lang { width: 40px; margin-left: 23px; align-items: center; }
.clock { width: 90px; margin-left: 20.5px; align-items: flex-end; }
.t-wifi { margin-left: 25px; margin-top: -2px; }
.t-vol { margin-left: 12px; margin-top: -2px; }
.t-bat { margin-left: 12.5px; margin-top: -4px; }
.t-bell { margin-left: 13px; margin-top: -2px; }
```
